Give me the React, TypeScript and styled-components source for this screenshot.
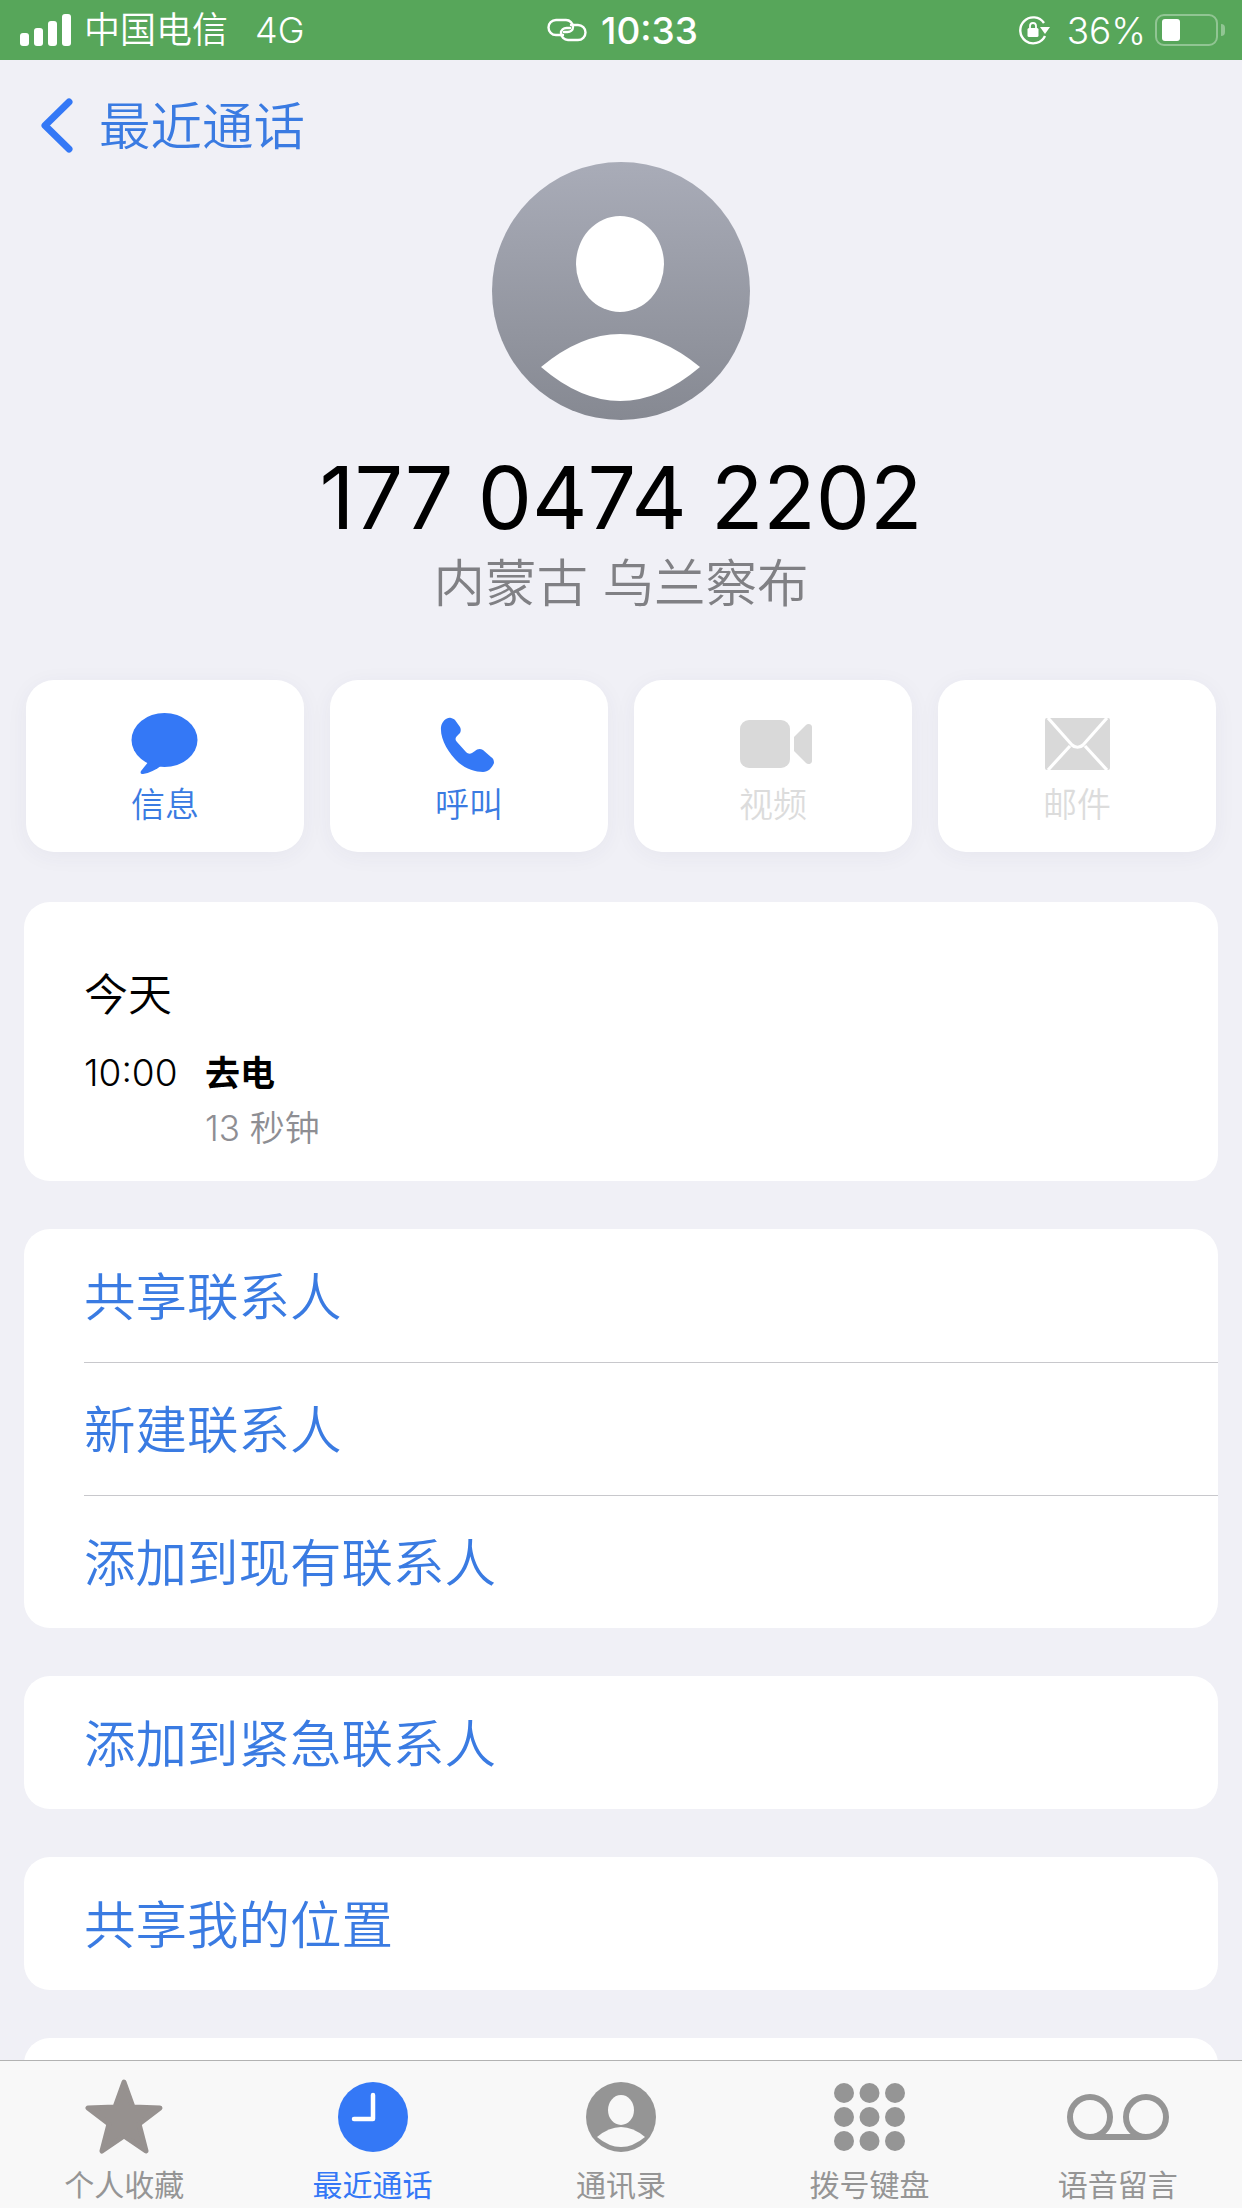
import React from 'react'
import styled, { createGlobalStyle } from 'styled-components'

const BLUE = '#3478f6'
const TEXT_BLUE = '#3a7be2'
const MUTED = '#d9d9d9'
const TAB_GREY = '#959595'
const FONT = '"Inter", "Noto Sans CJK SC", sans-serif'

const GlobalStyle = createGlobalStyle`
  html, body {
    margin: 0;
    padding: 0;
    width: 1242px;
    height: 2208px;
    overflow: hidden;
    background: #f0f0f6;
  }
  * { box-sizing: border-box; }
  svg { flex: none; }
`

const Screen = styled.div`
  display: flex;
  flex-direction: column;
  width: 1242px;
  height: 2208px;
  overflow: hidden;
  background: #f0f0f6;
  font-family: ${FONT};
`

const StatusBar = styled.div`
  flex: none;
  display: grid;
  grid-template-columns: 1fr auto 1fr;
  align-items: center;
  height: 60px;
  padding: 0 17px 0 20px;
  background: #57a65a;
  color: #fff;
  font-size: 35px;
  font-weight: 350;
`

const StatusGroup = styled.div<{ $end?: boolean }>`
  display: flex;
  align-items: center;
  justify-content: ${(p) => (p.$end ? 'flex-end' : 'flex-start')};
`

const Carrier = styled.span`
  margin-left: 13px;
  font-size: 36px;
  line-height: 60px;
`

const Network = styled.span`
  margin-left: 27px;
  font-size: 36px;
`

const Clock = styled.span`
  margin-left: 14px;
  font-size: 37px;
  font-weight: 500;
`

const Percent = styled.span`
  margin: 0 9px 0 16px;
  font-size: 37px;
`

const Battery = styled.div`
  display: flex;
  align-items: center;
  width: 63px;
  height: 32px;
  padding: 0 5px;
  border: 2px solid rgba(255, 255, 255, 0.35);
  border-radius: 9px;
`

const BatteryFill = styled.div`
  width: 18px;
  height: 22px;
  border-radius: 3px;
  background: #fff;
`

const BatteryTip = styled.div`
  width: 4px;
  height: 12px;
  margin-left: 3px;
  border-radius: 0 4px 4px 0;
  background: rgba(255, 255, 255, 0.35);
`

const Content = styled.div`
  flex: 1;
  min-height: 0;
  overflow: hidden;
  display: flex;
  flex-direction: column;
  align-items: center;
`

const NavBar = styled.div`
  flex: none;
  align-self: stretch;
  display: flex;
  align-items: flex-start;
  gap: 25px;
  height: 102px;
  padding: 37px 0 0 40px;
`

const BackLabel = styled.span`
  color: ${TEXT_BLUE};
  font-size: 51.5px;
  font-weight: 350;
  line-height: 58px;
`

const PhoneNumber = styled.h1`
  flex: none;
  margin: 28px 0 0;
  color: #000;
  font-size: 86px;
  font-weight: 400;
  line-height: 100px;
`

const Location = styled.div`
  flex: none;
  margin-top: 5px;
  color: #808084;
  font-size: 51.5px;
  font-weight: 350;
  line-height: 60px;
`

const Actions = styled.div`
  flex: none;
  display: grid;
  grid-template-columns: repeat(4, 278px);
  gap: 26px;
  margin-top: 67px;
`

const ActionButton = styled.div<{ $disabled?: boolean }>`
  display: flex;
  flex-direction: column;
  align-items: center;
  height: 172px;
  padding-top: 32px;
  border-radius: 28px;
  background: #fff;
  box-shadow: 0 4px 22px rgba(60, 60, 90, 0.05);
  color: ${(p) => (p.$disabled ? '#dcdcdc' : TEXT_BLUE)};
`

const ActionIcon = styled.div`
  display: flex;
  align-items: center;
  justify-content: center;
  height: 64px;
`

const ActionLabel = styled.span`
  margin-top: 10px;
  font-size: 34px;
  font-weight: 350;
  line-height: 38px;
`

const Card = styled.section`
  flex: none;
  width: 1194px;
  margin-top: 48px;
  border-radius: 26px;
  background: #fff;
  overflow: hidden;
`

const HistoryCard = styled(Card)`
  height: 279px;
  margin-top: 50px;
  padding: 63px 0 0 60px;
`

const HistoryDay = styled.div`
  color: #000;
  font-size: 44px;
  font-weight: 350;
  line-height: 60px;
`

const HistoryRow = styled.div`
  display: grid;
  grid-template-columns: 121px 1fr;
  margin-top: 26px;
  line-height: 44px;
`

const HistoryTime = styled.span`
  font-size: 37px;
  font-weight: 300;
`

const HistoryKind = styled.span`
  font-size: 35px;
  font-weight: 700;
`

const HistoryLength = styled.div`
  margin: 11px 0 0 121px;
  color: #8e8e93;
  font-size: 35px;
  font-weight: 350;
  line-height: 44px;
`

const Row = styled.div<{ $divider?: boolean }>`
  display: flex;
  align-items: center;
  height: 133px;
  margin-left: 60px;
  padding-bottom: 5px;
  border-top: ${(p) => (p.$divider ? '1px solid #c8c8cc' : 'none')};
  color: ${TEXT_BLUE};
  font-size: 51.5px;
  font-weight: 350;
`

const TabBar = styled.nav`
  flex: none;
  display: grid;
  grid-template-columns: repeat(5, 1fr);
  height: 148px;
  padding-top: 18px;
  border-top: 1px solid #b2b2b2;
  background: #f8f8f8;
`

const Tab = styled.div<{ $active?: boolean }>`
  display: flex;
  flex-direction: column;
  align-items: center;
  color: ${(p) => (p.$active ? BLUE : TAB_GREY)};
`

const TabIcon = styled.div`
  display: flex;
  align-items: center;
  justify-content: center;
  height: 76px;
`

const TabLabel = styled.span`
  margin-top: 12px;
  font-size: 30px;
  font-weight: 400;
  line-height: 36px;
`

const Signal = () => (
  <svg width="51" height="32" viewBox="0 0 51 32" fill="#fff">
    <rect x="0" y="19" width="9" height="13" rx="3" />
    <rect x="14" y="14" width="9" height="18" rx="3" />
    <rect x="28" y="7" width="9" height="25" rx="3" />
    <rect x="42" y="0" width="9" height="32" rx="3" />
  </svg>
)

const LinkIcon = () => (
  <svg width="40" height="24" viewBox="0 0 40 24" fill="none" stroke="#fff" strokeWidth="2.4">
    <path d="M16 17H9a7.5 7.5 0 0 1 0-15h10a7 7 0 0 1 7 7c0 3-2.5 5-5.5 5H17" strokeLinecap="round" />
    <path d="M24 7h7a7.5 7.5 0 0 1 0 15H21a7 7 0 0 1-7-7c0-3 2.5-5 5.5-5H23" strokeLinecap="round" />
  </svg>
)

const RotationLock = () => (
  <svg width="33" height="30" viewBox="0 0 33 30">
    <path d="M27 21a13 13 0 1 1-1-13" fill="none" stroke="#fff" strokeWidth="2.4" />
    <path d="M22 12h10l-5 7z" fill="#fff" />
    <rect x="9.5" y="13" width="11" height="9" rx="1.5" fill="#fff" />
    <path d="M12 13v-2a3 3 0 0 1 6 0v2" fill="none" stroke="#fff" strokeWidth="1.8" />
  </svg>
)

const BackChevron = () => (
  <svg width="34" height="57" viewBox="0 0 34 57" fill="none">
    <path d="M29 5L5 28.5 29 52" stroke={BLUE} strokeWidth="7" strokeLinecap="round" strokeLinejoin="round" />
  </svg>
)

const AvatarArt = () => (
  <svg width="258" height="258" viewBox="0 0 258 258">
    <defs>
      <linearGradient id="avatarFill" x1="0" y1="0" x2="0" y2="1">
        <stop offset="0" stopColor="#a9acb8" />
        <stop offset="1" stopColor="#868992" />
      </linearGradient>
    </defs>
    <circle cx="129" cy="129" r="129" fill="url(#avatarFill)" />
    <ellipse cx="128" cy="102" rx="44" ry="48" fill="#fff" />
    <path d="M49 205Q128 139 208 205Q128 273 49 205Z" fill="#fff" />
  </svg>
)

const MessageIcon = () => (
  <svg width="69" height="62" viewBox="0 0 69 62" fill={BLUE}>
    <ellipse cx="33.5" cy="27" rx="33" ry="27" />
    <path d="M18 48L10 58c-1 2 0 3 2 3 6-1 13-4 19-9z" />
  </svg>
)

const PhoneIcon = () => (
  <svg width="58" height="55" viewBox="0 0 58 55" fill={BLUE}>
    <path d="M11 1C7 0 2 4 1 10C0 22 8 36 19 46C26 52 36 55 43 55C48 55 52 51 54 46C54 43 53 41 51 40L43 33C40 31 37 32 35 34L32 36C30 37 28 37 26 35L17 25C15 23 15 21 17 19L20 16C21 14 21 12 20 10L15 3C14 2 12 1 11 1Z" />
  </svg>
)

const VideoIcon = () => (
  <svg width="78" height="48" viewBox="-6 0 78 48" fill={MUTED}>
    <rect x="0" y="0" width="50" height="48" rx="9" />
    <path d="M54 17L66 5c2-2 6-1 6 2v34c0 3-4 4-6 2L54 31z" />
  </svg>
)

const MailIcon = () => (
  <svg width="65" height="52" viewBox="0 0 65 52">
    <rect x="0" y="0" width="65" height="52" rx="2" fill={MUTED} />
    <path d="M3 0L27 27c3 3 8 3 11 0L62 0M3 52L25 28M62 52L40 28" fill="none" stroke="#fff" strokeWidth="3.2" />
  </svg>
)

const StarIcon = () => (
  <svg width="80" height="76" viewBox="0 0 80 76" fill="#96918f" stroke="#96918f" strokeWidth="5" strokeLinejoin="round">
    <path d="M40 3L49 28L76 29L55 45L62 72L40 57L18 72L25 45L4 29L31 28Z" />
  </svg>
)

const ClockIcon = () => (
  <svg width="70" height="70" viewBox="0 0 70 70">
    <circle cx="35" cy="35" r="35" fill={BLUE} />
    <path d="M35 13V37H16" fill="none" stroke="#fff" strokeWidth="4.5" strokeLinecap="round" strokeLinejoin="round" />
  </svg>
)

const ContactIcon = () => (
  <svg width="70" height="70" viewBox="0 0 70 70">
    <circle cx="35" cy="35" r="35" fill={TAB_GREY} />
    <ellipse cx="35" cy="28" rx="13" ry="15" fill="#f8f8f8" />
    <path d="M11 55Q35 35 59 55Q35 75 11 55Z" fill="#f8f8f8" />
  </svg>
)

const KeypadIcon = () => (
  <svg width="71" height="68" viewBox="0 0 71 68" fill={TAB_GREY}>
    {[10, 34, 58].map((cy) =>
      [10, 35.5, 61].map((cx) => <circle key={`${cx}-${cy}`} cx={cx} cy={cy} r="10" />),
    )}
  </svg>
)

const VoicemailIcon = () => (
  <svg width="102" height="46" viewBox="0 0 102 46" fill="none" stroke={TAB_GREY} strokeWidth="6">
    <circle cx="23" cy="23" r="20" />
    <circle cx="79" cy="23" r="20" />
    <path d="M23 43H79" />
  </svg>
)

const actions = [
  { label: '信息', icon: <MessageIcon /> },
  { label: '呼叫', icon: <PhoneIcon /> },
  { label: '视频', icon: <VideoIcon />, disabled: true },
  { label: '邮件', icon: <MailIcon />, disabled: true },
]

const tabs = [
  { label: '个人收藏', icon: <StarIcon /> },
  { label: '最近通话', icon: <ClockIcon />, active: true },
  { label: '通讯录', icon: <ContactIcon /> },
  { label: '拨号键盘', icon: <KeypadIcon /> },
  { label: '语音留言', icon: <VoicemailIcon /> },
]

const App: React.FC = () => {
  return (
    <Screen>
      <GlobalStyle />
      <StatusBar>
        <StatusGroup>
          <Signal />
          <Carrier>中国电信</Carrier>
          <Network>4G</Network>
        </StatusGroup>
        <StatusGroup>
          <LinkIcon />
          <Clock>10:33</Clock>
        </StatusGroup>
        <StatusGroup $end>
          <RotationLock />
          <Percent>36%</Percent>
          <Battery>
            <BatteryFill />
          </Battery>
          <BatteryTip />
        </StatusGroup>
      </StatusBar>
      <Content>
        <NavBar>
          <BackChevron />
          <BackLabel>最近通话</BackLabel>
        </NavBar>
        <AvatarArt />
        <PhoneNumber>177 0474 2202</PhoneNumber>
        <Location>内蒙古 乌兰察布</Location>
        <Actions>
          {actions.map((a) => (
            <ActionButton key={a.label} $disabled={a.disabled}>
              <ActionIcon>{a.icon}</ActionIcon>
              <ActionLabel>{a.label}</ActionLabel>
            </ActionButton>
          ))}
        </Actions>
        <HistoryCard>
          <HistoryDay>今天</HistoryDay>
          <HistoryRow>
            <HistoryTime>10:00</HistoryTime>
            <HistoryKind>去电</HistoryKind>
          </HistoryRow>
          <HistoryLength>13 秒钟</HistoryLength>
        </HistoryCard>
        <Card>
          <Row>共享联系人</Row>
          <Row $divider>新建联系人</Row>
          <Row $divider>添加到现有联系人</Row>
        </Card>
        <Card>
          <Row>添加到紧急联系人</Row>
        </Card>
        <Card>
          <Row>共享我的位置</Row>
        </Card>
        <Card>
          <Row />
        </Card>
      </Content>
      <TabBar>
        {tabs.map((t) => (
          <Tab key={t.label} $active={t.active}>
            <TabIcon>{t.icon}</TabIcon>
            <TabLabel>{t.label}</TabLabel>
          </Tab>
        ))}
      </TabBar>
    </Screen>
  )
}

export default App
